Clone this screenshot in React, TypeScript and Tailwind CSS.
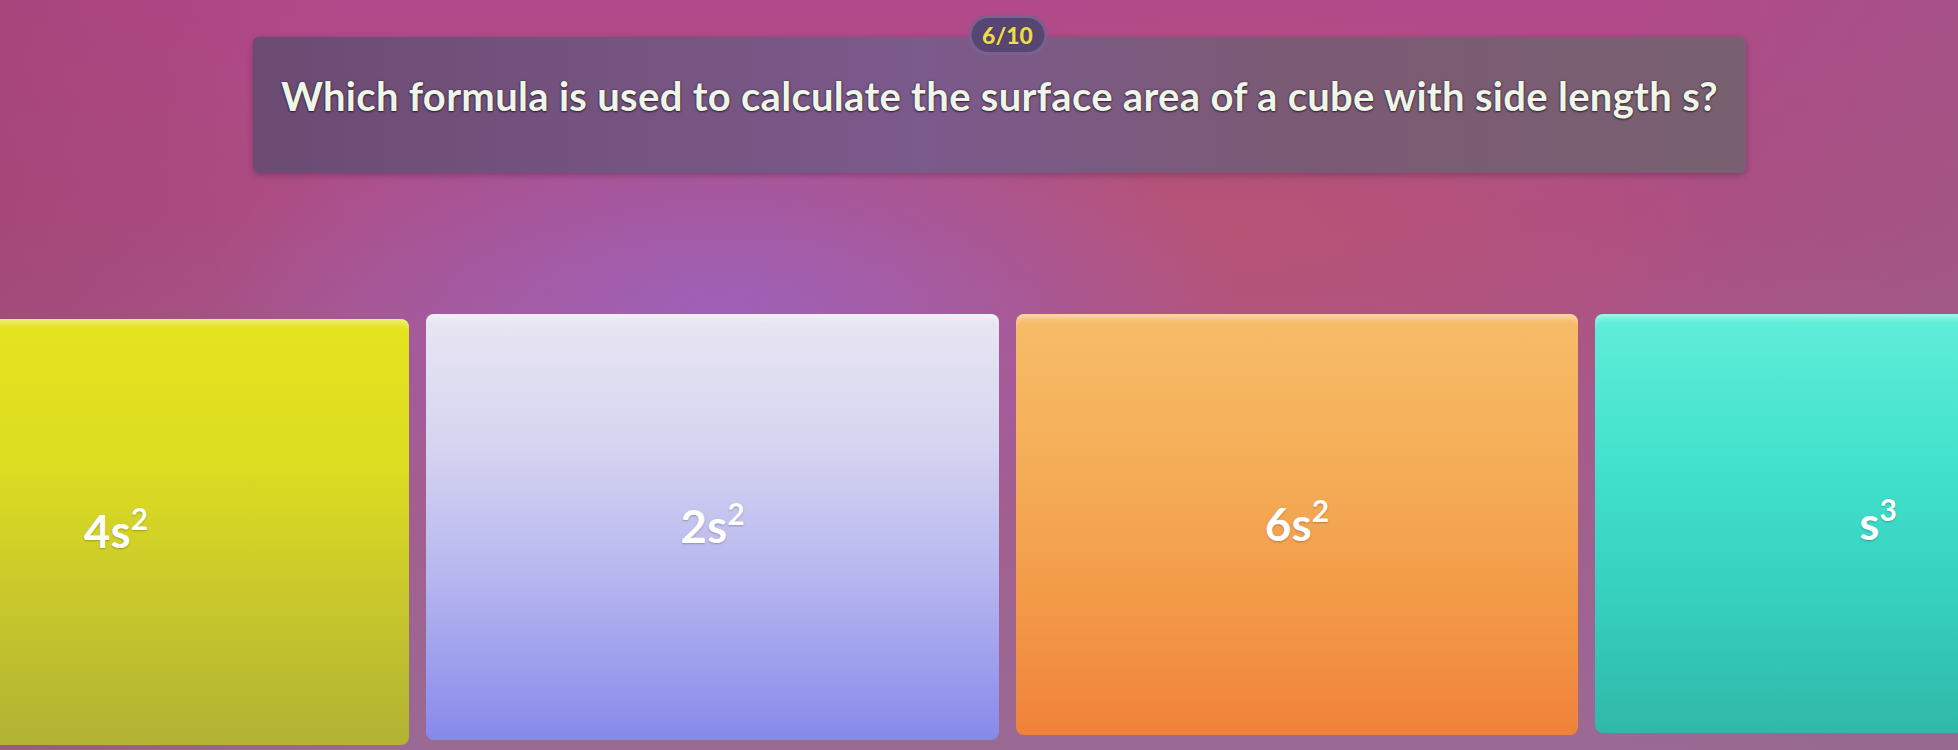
import React from "react";

const cards = [
  {
    base: "4s",
    sup: "2",
    cls: "w-[570px] h-[426px] mt-[5px] bg-[linear-gradient(180deg,#e4e41e_0%,#dcdc22_35%,#c8c82c_65%,#b2b234_100%)]",
    shift: "ml-[-16px]",
  },
  {
    base: "2s",
    sup: "2",
    cls: "w-[573px] h-[426px] mt-0 bg-[linear-gradient(180deg,#e9e7f3_0%,#d6d5f0_30%,#b6b6f0_62%,#8789ea_100%)]",
    shift: "ml-0",
  },
  {
    base: "6s",
    sup: "2",
    cls: "w-[562px] h-[421px] mt-0 bg-[linear-gradient(180deg,#f7bc68_0%,#f5ae58_35%,#f39c48_65%,#f0823a_100%)]",
    shift: "ml-0",
  },
  {
    base: "s",
    sup: "3",
    cls: "w-[570px] h-[419px] mt-0 bg-[linear-gradient(180deg,#60eed9_0%,#42e2cc_35%,#36d2bf_65%,#30b8a8_100%)]",
    shift: "ml-[-4px]",
  },
];

export default function App() {
  return (
    <div
      className="w-[1958px] h-[750px] overflow-hidden bg-[radial-gradient(ellipse_520px_240px_at_720px_310px,rgba(158,98,186,0.95),rgba(158,98,186,0)),radial-gradient(ellipse_520px_240px_at_1240px_230px,rgba(184,84,116,0.9),rgba(184,84,116,0)),linear-gradient(90deg,rgba(150,60,100,0.35)_0%,rgba(150,60,100,0)_18%,rgba(150,60,100,0)_82%,rgba(140,100,130,0.3)_100%),linear-gradient(180deg,#b2498a_0%,#ad4e84_30%,#a65a8c_55%,#9a6a94_100%)]"
      style={{ fontFamily: "Lato, 'Noto Sans', sans-serif" }}
    >
      <div className="relative ml-[253px] mt-[37px] w-[1493px] h-[136px] rounded-md bg-[linear-gradient(90deg,#6b4b72_0%,#755480_25%,#7b5a8c_45%,#7b5a74_70%,#786070_100%)] shadow-[0_2px_6px_rgba(60,20,50,0.35)] pt-[35px]">
        <div className="absolute left-1/2 top-[-22px] ml-[8px] -translate-x-1/2 w-[79px] h-[40px] rounded-full bg-[#574573] border-[3px] border-[#8a6c9c]/70 flex items-center justify-center">
          <span className="text-[23px] font-black leading-none text-[#eadc4c] [text-shadow:0_0_2px_rgba(60,40,20,0.6)]">
            6/10
          </span>
        </div>
        <p className="text-center text-[40px] leading-[48px] font-bold text-[#eef6e8] tracking-[0.3px] [text-shadow:0_1px_2px_rgba(40,20,40,0.85),0_0_2px_rgba(40,20,40,0.7)]">
          Which formula is used to calculate the surface area of a cube with side length s?
        </p>
      </div>

      <div className="flex items-start gap-[17px] ml-[-161px] mt-[141px]">
        {cards.map((c, i) => (
          <div
            key={i}
            className={`flex-none rounded-lg flex items-center justify-center shadow-[inset_0_10px_6px_-6px_rgba(255,255,255,0.45)] ${c.cls}`}
          >
            <span
              className={`text-[46px] font-bold text-white leading-none [text-shadow:0_1px_2px_rgba(0,0,0,0.25)] -mt-[2px] ${c.shift}`}
            >
              {c.base}
              <sup className="text-[30px] align-super relative top-[-2px]">{c.sup}</sup>
            </span>
          </div>
        ))}
      </div>
    </div>
  );
}
